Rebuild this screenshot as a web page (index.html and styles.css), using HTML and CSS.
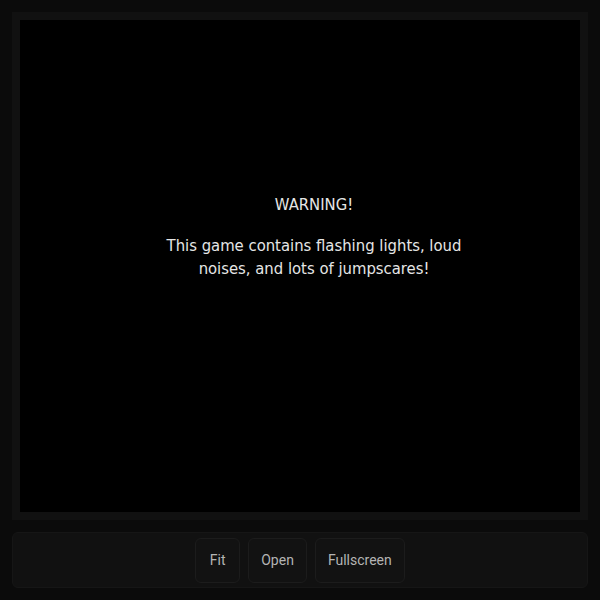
FILE: index.html
```html
<!DOCTYPE html>
<html>
<head>
<meta charset="utf-8">
<link rel="stylesheet" href="styles.css">
</head>
<body>
<div class="app">
  <div class="stage">
    <div class="canvas">
      <div class="message">
        <p class="title">WARNING!</p>
        <p class="body">This game contains flashing lights, loud<br>noises, and lots of jumpscares!</p>
      </div>
    </div>
  </div>
  <div class="toolbar">
    <button class="btn">Fit</button>
    <button class="btn">Open</button>
    <button class="btn">Fullscreen</button>
  </div>
</div>
</body>
</html>
```

FILE: styles.css
```css
html, body {
  margin: 0;
  padding: 0;
  background: #0b0b0b;
  height: 100%;
}
.app {
  box-sizing: border-box;
  height: 600px;
  padding: 12px;
  display: flex;
  flex-direction: column;
  gap: 12px;
}
.stage {
  background: #111111;
  padding: 8px;
  height: 492px;
  flex: none;
}
.canvas {
  background: #000000;
  height: 100%;
  display: flex;
  justify-content: center;
}
.message {
  padding-top: 173px;
  padding-left: 28px;
  text-align: center;
  color: #e6e6e6;
  font-family: "DejaVu Sans Condensed", "DejaVu Sans", sans-serif;
  font-size: 16.5px;
  line-height: 23px;
}
.message p {
  margin: 0;
}
.message .title {
  margin-bottom: 18px;
}
.toolbar {
  box-sizing: border-box;
  height: 56px;
  background: #111111;
  border: 1px solid #161616;
  border-radius: 6px;
  display: flex;
  justify-content: center;
  align-items: center;
  gap: 8px;
}
.btn {
  box-sizing: border-box;
  height: 45px;
  min-width: 45px;
  padding: 0 12px;
  background: #121212;
  border: 1px solid #1c1c1c;
  border-radius: 6px;
  color: #b4b4b4;
  font-family: Roboto, "Liberation Sans", sans-serif;
  font-size: 14px;
}
```
